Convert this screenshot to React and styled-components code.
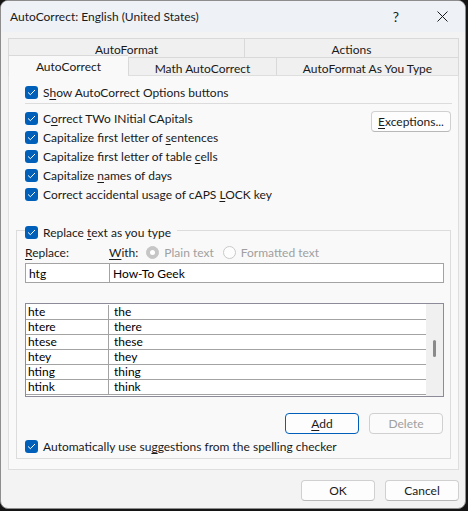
import React from 'react';
import styled, { createGlobalStyle } from 'styled-components';

const Global = createGlobalStyle`
  html, body { margin: 0; padding: 0; background: #141414; }
  body {
    width: 468px; height: 511px; overflow: hidden;
    font-family: Lato, "Noto Sans", sans-serif;
    font-size: 12px; color: #1a1a1a;
  }
  * { box-sizing: border-box; }
`;

const Window = styled.div`
  width: 466px;
  height: 509px;
  border: 1px solid #8d8d8d;
  border-radius: 8px;
  overflow: hidden;
  background: #f3f3f3;
  display: flex;
  flex-direction: column;
`;

const TitleBar = styled.div`
  height: 31px;
  display: flex;
  align-items: center;
  background: #eef2f7;
  padding-left: 9px;
`;

const TitleText = styled.div`
  flex: 1;
  font-size: 12px;
  color: #1a1a1a;
`;

const CaptionButton = styled.div`
  width: 46px;
  height: 31px;
  display: flex;
  align-items: center;
  justify-content: center;
  font-size: 14px;
  color: #1a1a1a;
`;

const Body = styled.div`
  flex: 1;
  display: flex;
  flex-direction: column;
  padding: 6px 6px 0 7px;
`;

const TabRow = styled.div`
  display: flex;
  height: 19px;
  align-items: flex-end;
`;

const Tab = styled.div`
  width: ${p => p.$w}px;
  height: ${p => (p.$active ? 21 : 19)}px;
  margin-top: ${p => (p.$active ? -2 : 0)}px;
  border: 1px solid #d9d9d9;
  border-bottom: none;
  border-right: ${p => (p.$last ? '1px solid #d9d9d9' : 'none')};
  background: ${p => (p.$active ? '#f9f9f9' : '#f0f0f0')};
  position: relative;
  z-index: ${p => (p.$active ? 2 : 0)};
  display: flex;
  align-items: center;
  justify-content: center;
  padding-top: ${p => (p.$active ? 0 : 2)}px;
  font-size: 12px;
  color: #1a1a1a;
`;

const Panel = styled.div`
  height: 395px;
  background: #f9f9f9;
  border: 1px solid #dedede;
  position: relative;
  z-index: 1;
  margin-top: -1px;
  padding: 7px 6px 0 7px;
  display: flex;
  flex-direction: column;
`;

const TopSection = styled.div`
  padding-left: 9px;
  display: flex;
  flex-direction: column;
`;

const CheckRow = styled.div`
  display: flex;
  align-items: center;
  gap: 5px;
  height: 19px;
  white-space: nowrap;
  margin-top: ${p => p.$mt || 0}px;
`;

const Box = styled.span`
  width: 13px;
  height: 13px;
  border-radius: 3px;
  background: #005fb8;
  display: flex;
  align-items: center;
  justify-content: center;
  flex: none;
`;

const U = styled.span`
  text-decoration: underline;
  text-underline-offset: 2px;
  text-decoration-thickness: 1px;
`;

const Separator = styled.div`
  height: 1px;
  background: #dcdcdc;
  margin: 1px 0 5px 0;
  width: 427px;
`;

const OptionsRow = styled.div`
  display: flex;
  justify-content: space-between;
  align-items: flex-start;
  padding-right: 1px;
`;

const Column = styled.div`
  display: flex;
  flex-direction: column;
`;

const Button = styled.div`
  width: ${p => p.$w || 74}px;
  height: 21px;
  border-radius: 4px;
  background: ${p => (p.$disabled ? '#fbfbfb' : '#fdfdfd')};
  border: 1px solid ${p => (p.$primary ? '#005fb8' : '#d0d0d0')};
  border-bottom-color: ${p => (p.$primary ? '#005fb8' : p.$disabled ? '#d0d0d0' : '#b8b8b8')};
  color: ${p => (p.$disabled ? '#a0a0a0' : '#1a1a1a')};
  display: flex;
  align-items: center;
  justify-content: center;
  font-size: 12px;
  margin-top: ${p => p.$mt || 0}px;
`;

const GroupBox = styled.div`
  margin-top: 26px;
  width: 435px;
  border: 1px solid #dcdcdc;
  padding: 0 6px 2px 8px;
  display: flex;
  flex-direction: column;
`;

const Legend = styled(CheckRow)`
  margin-top: -8px;
  align-self: flex-start;
  background: #f9f9f9;
  padding-right: 6px;
`;

const LabelsRow = styled.div`
  display: flex;
  align-items: center;
  height: 16px;
  margin-top: 2px;
  white-space: nowrap;
`;

const FieldLabel = styled.span`
  width: ${p => p.$w}px;
  flex: none;
`;

const RadioOption = styled.span`
  display: flex;
  align-items: center;
  gap: 5px;
  color: #a0a0a0;
  margin-left: ${p => p.$ml}px;
`;

const Radio = styled.span`
  width: 13px;
  height: 13px;
  border-radius: 50%;
  flex: none;
  display: flex;
  align-items: center;
  justify-content: center;
  background: ${p => (p.$checked ? '#c6c6c6' : '#fdfdfd')};
  border: 1px solid ${p => (p.$checked ? '#c6c6c6' : '#c9c9c9')};
  &::after {
    content: "";
    width: 5px;
    height: 5px;
    border-radius: 50%;
    background: #fff;
    display: ${p => (p.$checked ? 'block' : 'none')};
  }
`;

const InputsRow = styled.div`
  display: flex;
  margin-top: 3px;
  height: 20px;
`;

const Input = styled.div`
  width: ${p => (p.$w ? `${p.$w}px` : 'auto')};
  flex: ${p => (p.$w ? 'none' : '1')};
  margin-left: ${p => (p.$join ? -1 : 0)}px;
  border: 1px solid #a3a3a3;
  background: #fff;
  display: flex;
  align-items: center;
  padding-left: 3px;
  color: #000;
`;

const List = styled.div`
  margin-top: 20px;
  height: 94px;
  border: 1px solid #8b8b99;
  background: #fff;
  display: flex;
`;

const ListBody = styled.div`
  flex: 1;
  padding-top: 1px;
  display: flex;
  flex-direction: column;
`;

const ListRow = styled.div`
  display: grid;
  grid-template-columns: 83px 1fr;
  height: 15px;
  border-bottom: 1px solid #a3a3a3;
`;

const Cell = styled.div`
  display: flex;
  align-items: center;
  padding-left: ${p => (p.$second ? 5 : 2)}px;
  border-right: ${p => (p.$second ? 'none' : '1px solid #a3a3a3')};
  color: #000;
  line-height: 14px;
`;

const Scrollbar = styled.div`
  width: 17px;
  background: #f0f0f0;
  display: flex;
  justify-content: center;
  padding-top: 36px;
`;

const Thumb = styled.div`
  width: 3px;
  height: 17px;
  border-radius: 2px;
  background: #8a8a8a;
`;

const ButtonRow = styled.div`
  display: flex;
  justify-content: flex-end;
  gap: 10px;
  margin-top: ${p => p.$mt}px;
  padding-right: ${p => p.$pr || 0}px;
`;

const Check = () => (
  <Box>
    <svg width="9" height="9" viewBox="0 0 9 9">
      <path d="M1.3 4.7 L3.4 6.7 L7.7 2.3" stroke="#fff" strokeWidth="1" fill="none" strokeLinecap="round" strokeLinejoin="round" />
    </svg>
  </Box>
);

const rows = [
  ['hte', 'the'],
  ['htere', 'there'],
  ['htese', 'these'],
  ['htey', 'they'],
  ['hting', 'thing'],
  ['htink', 'think'],
];

export default function App() {
  return (
    <>
      <Global />
      <Window>
        <TitleBar>
          <TitleText>AutoCorrect: English (United States)</TitleText>
          <CaptionButton>?</CaptionButton>
          <CaptionButton>
            <svg width="11" height="11" viewBox="0 0 11 11">
              <path d="M0.5 0.5 L10.5 10.5 M10.5 0.5 L0.5 10.5" stroke="#1a1a1a" strokeWidth="1" />
            </svg>
          </CaptionButton>
        </TitleBar>
        <Body>
          <TabRow>
            <Tab $w={236}>AutoFormat</Tab>
            <Tab $w={215} $last>Actions</Tab>
          </TabRow>
          <TabRow>
            <Tab $w={120} $active>AutoCorrect</Tab>
            <Tab $w={148}>Math AutoCorrect</Tab>
            <Tab $w={183} $last>AutoFormat As You Type</Tab>
          </TabRow>
          <Panel>
            <TopSection>
              <CheckRow><Check /><span>S<U>h</U>ow AutoCorrect Options buttons</span></CheckRow>
              <Separator />
              <OptionsRow>
                <Column>
                  <CheckRow><Check /><span>C<U>o</U>rrect TWo INitial CApitals</span></CheckRow>
                  <CheckRow><Check /><span>Capitalize first letter of <U>s</U>entences</span></CheckRow>
                  <CheckRow><Check /><span>Capitalize first letter of table <U>c</U>ells</span></CheckRow>
                  <CheckRow><Check /><span>Capitalize <U>n</U>ames of days</span></CheckRow>
                  <CheckRow><Check /><span>Correct accidental usage of cAPS <U>L</U>OCK key</span></CheckRow>
                </Column>
                <Button $w={80} $mt={2}><span><U>E</U>xceptions...</span></Button>
              </OptionsRow>
            </TopSection>
            <GroupBox>
              <Legend><Check /><span>Replace <U>t</U>ext as you type</span></Legend>
              <LabelsRow>
                <FieldLabel $w={84}><U>R</U>eplace:</FieldLabel>
                <span><U>W</U>ith:</span>
                <RadioOption $ml={8}><Radio $checked /><span>Plain text</span></RadioOption>
                <RadioOption $ml={9}><Radio /><span>Formatted text</span></RadioOption>
              </LabelsRow>
              <InputsRow>
                <Input $w={85}>htg</Input>
                <Input $join>How-To Geek</Input>
              </InputsRow>
              <List>
                <ListBody>
                  {rows.map(([a, b]) => (
                    <ListRow key={a}>
                      <Cell>{a}</Cell>
                      <Cell $second>{b}</Cell>
                    </ListRow>
                  ))}
                </ListBody>
                <Scrollbar><Thumb /></Scrollbar>
              </List>
              <ButtonRow $mt={16} $pr={1}>
                <Button $primary><span><U>A</U>dd</span></Button>
                <Button $disabled>Delete</Button>
              </ButtonRow>
              <CheckRow $mt={3}><Check /><span>Automatically use su<U>g</U>gestions from the spelling checker</span></CheckRow>
            </GroupBox>
          </Panel>
          <ButtonRow $mt={10}>
            <Button>OK</Button>
            <Button>Cancel</Button>
          </ButtonRow>
        </Body>
      </Window>
    </>
  );
}
